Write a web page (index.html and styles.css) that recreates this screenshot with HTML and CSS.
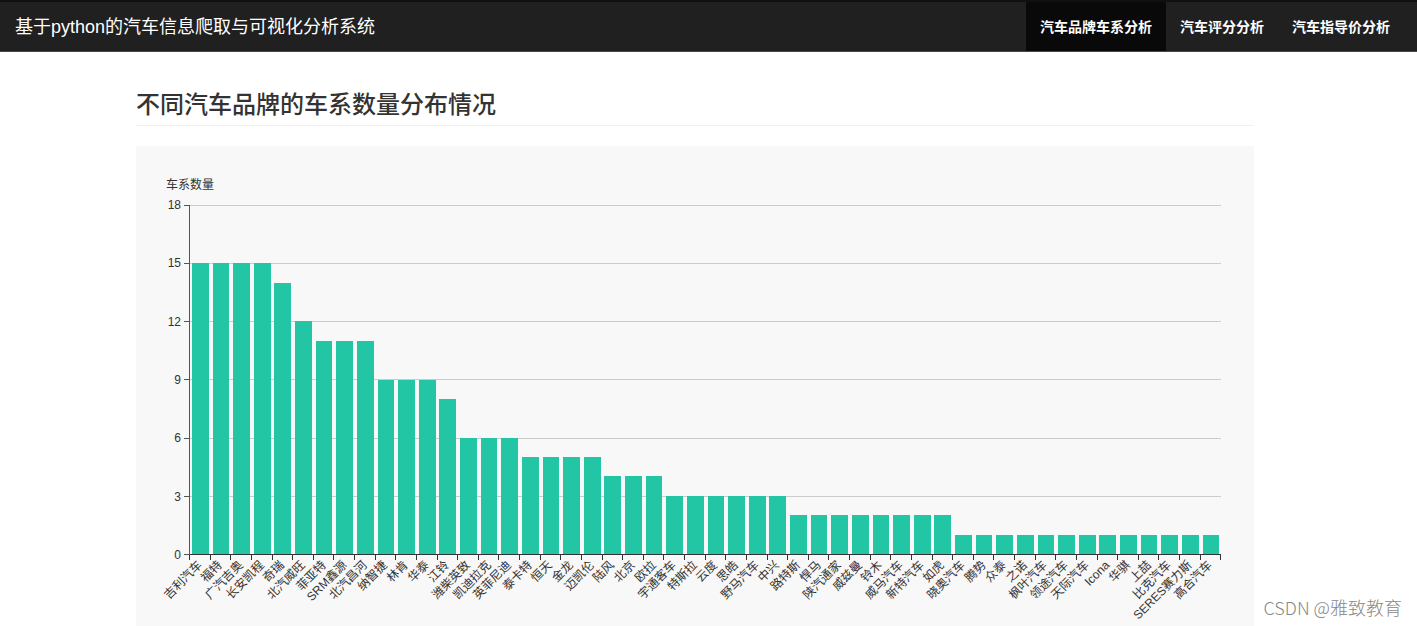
FILE: index.html
```html
<!DOCTYPE html>
<html lang="zh-CN">
<head>
<meta charset="utf-8">
<meta name="viewport" content="width=device-width, initial-scale=1">
<title>基于python的汽车信息爬取与可视化分析系统</title>
<link rel="stylesheet" href="styles.css">
</head>
<body>
<header class="navbar">
  <a class="brand" href="#">基于python的汽车信息爬取与可视化分析系统</a>
  <nav class="nav">
    <a class="nav-link active" href="#">汽车品牌车系分析</a>
    <a class="nav-link" href="#">汽车评分分析</a>
    <a class="nav-link" href="#">汽车指导价分析</a>
  </nav>
</header>
<main class="main">
  <h1 class="page-title">不同汽车品牌的车系数量分布情况</h1>
  <section class="panel">
    <div class="axis-name">车系数量</div>
    <div class="chart">
      <div class="y-axis" id="y-axis"></div>
      <div class="plot">
        <div class="grid-lines" id="grid-lines"></div>
        <div class="bars" id="bars"></div>
      </div>
      <div class="x-axis" id="x-axis"></div>
    </div>
  </section>
</main>
<div class="watermark">CSDN @雅致教育</div>
<script src="chart.js"></script>
</body>
</html>
```

FILE: styles.css
```css
* {
  box-sizing: border-box;
}

body {
  margin: 0;
  min-height: 100vh;
  display: flex;
  flex-direction: column;
  position: relative;
  overflow: hidden;
  background: #fff;
  color: #333;
  font-family: "Liberation Sans", "Noto Sans CJK SC", sans-serif;
  font-size: 12px;
  line-height: 16px;
}

.navbar {
  display: flex;
  justify-content: space-between;
  height: 52px;
  padding: 0 13px 0 15px;
  background: #202020;
  border-top: 2px solid #101010;
  border-bottom: 1px solid #484848;
}

.brand {
  display: flex;
  align-items: center;
  color: #fff;
  font-size: 18px;
  text-decoration: none;
  white-space: nowrap;
}

.nav {
  display: flex;
}

.nav-link {
  display: flex;
  align-items: center;
  padding: 0 14px;
  color: #fff;
  font-size: 14px;
  font-weight: bold;
  text-decoration: none;
  white-space: nowrap;
}

.nav-link.active {
  background: #090909;
}

.main {
  flex: 1;
  display: flex;
  flex-direction: column;
  padding: 35px 163px 0 136px;
}

.page-title {
  margin: 0 0 20px;
  padding-bottom: 6px;
  border-bottom: 1px solid #f0f0f0;
  font-family: "Noto Sans CJK SC", sans-serif;
  font-size: 24px;
  font-weight: 500;
  line-height: 32px;
}

.panel {
  flex: 1;
  padding: 31px 33px 0 30px;
  background: #f8f8f8;
}

.axis-name {
  margin-bottom: 12px;
}

.chart {
  display: grid;
  grid-template-columns: 23px 1fr;
  grid-template-rows: 350px 64px;
}

.y-axis {
  display: flex;
  flex-direction: column;
  justify-content: space-between;
  margin: -8px 0;
}

.y-label {
  display: flex;
  align-items: center;
  justify-content: flex-end;
  gap: 3px;
}

.y-label::after {
  content: "";
  width: 5px;
  height: 1px;
  background: #555;
}

.plot {
  display: grid;
  border-left: 1px solid #555;
}

.grid-lines,
.bars {
  grid-area: 1 / 1;
}

.grid-lines {
  display: flex;
  flex-direction: column;
  justify-content: space-between;
}

.grid-line {
  height: 1px;
  background: #ccc;
}

.bars {
  display: flex;
  align-items: flex-end;
  border-bottom: 1px solid #333;
}

.bar-slot {
  flex: 1;
  height: 100%;
  display: flex;
  align-items: flex-end;
  justify-content: center;
}

.bar {
  width: 81%;
  background: #22c5a4;
}

.x-axis {
  grid-column: 2;
  display: flex;
  border-right: 1px solid #333;
  height: 5px;
}

.x-slot {
  flex: 1 1 0;
  width: 0;
  display: flex;
  justify-content: flex-end;
  border-left: 1px solid #333;
}

.x-label {
  flex: none;
  height: 16px;
  margin-right: 50%;
  white-space: nowrap;
  transform: rotate(-45deg);
  transform-origin: right center;
}

.watermark {
  position: absolute;
  right: 15px;
  bottom: 7px;
  color: #888;
  font-family: "Noto Sans CJK SC", sans-serif;
  font-size: 18px;
  font-weight: 300;
  line-height: 24px;
}
```

FILE: chart.js
```js
const series = [
  ["吉利汽车", 15], ["福特", 15], ["广汽吉奥", 15], ["长安凯程", 15], ["奇瑞", 14],
  ["北汽威旺", 12], ["菲亚特", 11], ["SRM鑫源", 11], ["北汽昌河", 11], ["纳智捷", 9],
  ["林肯", 9], ["华泰", 9], ["江铃", 8], ["潍柴英致", 6], ["凯迪拉克", 6],
  ["英菲尼迪", 6], ["泰卡特", 5], ["恒天", 5], ["金龙", 5], ["迈凯伦", 5],
  ["陆风", 4], ["北京", 4], ["欧拉", 4], ["宇通客车", 3], ["特斯拉", 3],
  ["云度", 3], ["思皓", 3], ["野马汽车", 3], ["中兴", 3], ["路特斯", 2],
  ["悍马", 2], ["陕汽通家", 2], ["威兹曼", 2], ["铃木", 2], ["威马汽车", 2],
  ["新特汽车", 2], ["如虎", 2], ["晓奥汽车", 1], ["腾势", 1], ["众泰", 1],
  ["之诺", 1], ["枫叶汽车", 1], ["领途汽车", 1], ["天际汽车", 1], ["Icona", 1],
  ["华骐", 1], ["上喆", 1], ["比克汽车", 1], ["SERES赛力斯", 1], ["高合汽车", 1]
];
const max = 18;
const step = 3;

function add(parent, className, text) {
  const el = document.createElement("div");
  el.className = className;
  if (text !== undefined) el.textContent = text;
  parent.appendChild(el);
  return el;
}

const yAxis = document.getElementById("y-axis");
const gridLines = document.getElementById("grid-lines");
for (let v = max; v >= 0; v -= step) {
  add(yAxis, "y-label", v);
  add(gridLines, "grid-line");
}

const bars = document.getElementById("bars");
const xAxis = document.getElementById("x-axis");
for (const [name, value] of series) {
  const bar = add(add(bars, "bar-slot"), "bar");
  bar.style.height = (value / max * 100) + "%";
  add(add(xAxis, "x-slot"), "x-label", name);
}
```
